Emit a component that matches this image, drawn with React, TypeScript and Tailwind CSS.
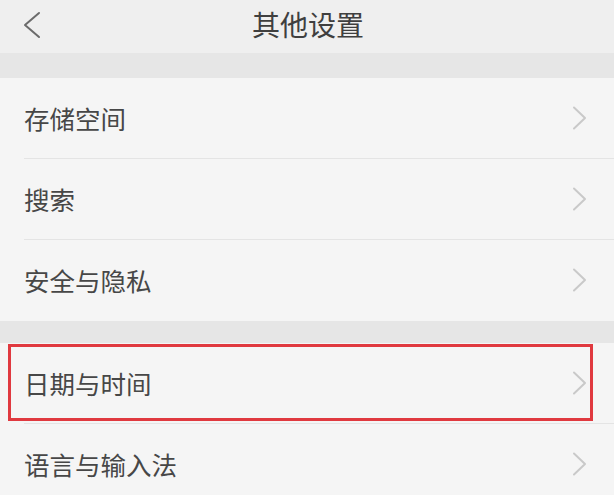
import React from "react";

const font = { fontFamily: '"Noto Sans CJK SC", "Noto Sans", sans-serif' };

function Chevron() {
  return (
    <svg width="15" height="24" viewBox="0 0 15 24" className="shrink-0">
      <path d="M2 1.5 L13 12 L2 22.5" fill="none" stroke="#c9c9c9" strokeWidth="2" strokeLinecap="round" strokeLinejoin="round" />
    </svg>
  );
}

function Row({ label, divider = true, highlight = false }: { label: string; divider?: boolean; highlight?: boolean }) {
  return (
    <div className="relative bg-[#f5f5f5] h-[81px]">
      <div className="flex items-center justify-between h-[80px] pl-6 pr-[27px]">
        <span className="text-[25.5px] text-[#474747] leading-none">{label}</span>
        <Chevron />
      </div>
      {divider && <div className="ml-6 h-px bg-[#e4e4e4]" />}
      {highlight && (
        <div className="absolute left-[8px] top-[1px] w-[585px] h-[77px] border-[3px] border-[#e0393f]" />
      )}
    </div>
  );
}

export default function App() {
  return (
    <div className="w-[614px] h-[495px] overflow-hidden bg-[#f5f5f5]" style={font}>
      <div className="relative h-[53px] bg-[#efefef] flex items-center justify-center">
        <svg width="22" height="28" viewBox="0 0 22 28" className="absolute left-[21px] top-[11px]">
          <path d="M18 2 L4 14 L18 26" fill="none" stroke="#6b6b6b" strokeWidth="2" strokeLinecap="round" strokeLinejoin="round" />
        </svg>
        <span className="text-[28px] text-[#3f3f3f] leading-none -mt-[5px] ml-[2px]">其他设置</span>
      </div>
      <div className="h-[25px] bg-[#e6e6e6]" />
      <Row label="存储空间" />
      <Row label="搜索" />
      <Row label="安全与隐私" divider={false} />
      <div className="h-[22px] bg-[#e6e6e6]" />
      <Row label="日期与时间" highlight />
      <Row label="语言与输入法" />
    </div>
  );
}
